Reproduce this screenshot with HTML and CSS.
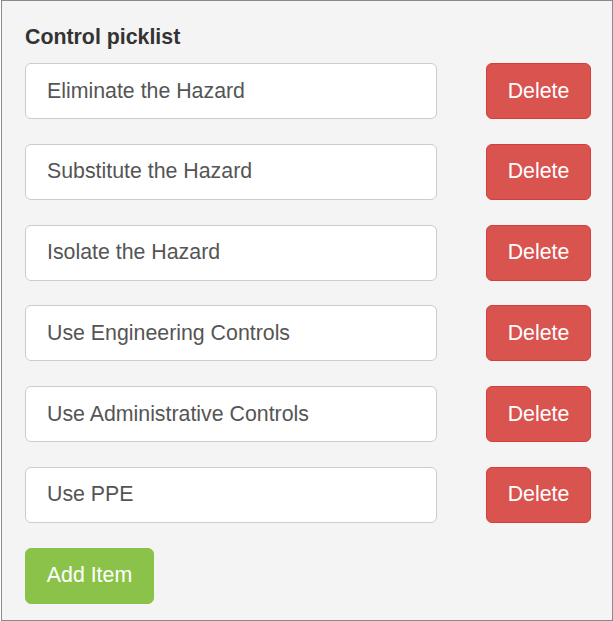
FILE: index.html
```html
<!DOCTYPE html>
<html>
<head>
    <title>Control picklist</title>
    <link rel="stylesheet" href="styles.css">
</head>
<body>
    <!-- Picklist editor -->
    <div class="picklist">
        <div class="picklist-title">Control picklist</div>
        <div class="picklist-rows">
            <div class="picklist-row">
                <input class="item-input" type="text" value="Eliminate the Hazard">
                <button class="btn btn-delete">Delete</button>
            </div>
            <div class="picklist-row">
                <input class="item-input" type="text" value="Substitute the Hazard">
                <button class="btn btn-delete">Delete</button>
            </div>
            <div class="picklist-row">
                <input class="item-input" type="text" value="Isolate the Hazard">
                <button class="btn btn-delete">Delete</button>
            </div>
            <div class="picklist-row">
                <input class="item-input" type="text" value="Use Engineering Controls">
                <button class="btn btn-delete">Delete</button>
            </div>
            <div class="picklist-row">
                <input class="item-input" type="text" value="Use Administrative Controls">
                <button class="btn btn-delete">Delete</button>
            </div>
            <div class="picklist-row">
                <input class="item-input" type="text" value="Use PPE">
                <button class="btn btn-delete">Delete</button>
            </div>
            <div class="picklist-row">
                <button class="btn btn-add">Add Item</button>
            </div>
        </div>
    </div>
</body>
</html>
```

FILE: styles.css
```css
html, body {
    margin: 0;
    height: 100%;
}

body {
    background: #ffffff;
    font-family: "Liberation Sans", Arial, sans-serif;
    font-size: 21.33px;
}

.picklist {
    box-sizing: border-box;
    margin-left: 1px;
    width: 612px;
    height: 621px;
    background: #f4f4f4;
    border: 1px solid #8a8a8a;
    padding: 24px 21px 0 23px;
}

.picklist-title {
    font-weight: bold;
    color: #333333;
    line-height: 24px;
    margin-bottom: 14px;
}

.picklist-rows {
    display: flex;
    flex-direction: column;
    gap: 24.8px;
}

.picklist-row {
    display: flex;
    justify-content: space-between;
    height: 56px;
}

.item-input {
    box-sizing: border-box;
    width: 412px;
    height: 56px;
    padding: 0 21px;
    border: 1px solid #cccccc;
    border-radius: 6px;
    background: #ffffff;
    color: #555555;
    font-family: inherit;
    font-size: 21.33px;
    outline: none;
}

.btn {
    box-sizing: border-box;
    height: 56px;
    border-radius: 6px;
    color: #ffffff;
    font-family: inherit;
    font-size: 21.33px;
    cursor: pointer;
    padding: 0;
}

.btn-delete {
    width: 105px;
    background: #d9534f;
    border: 1px solid #d43f3a;
}

.btn-add {
    width: 129px;
    background: #8bc34a;
    border: 1px solid #8bc34a;
}
```
